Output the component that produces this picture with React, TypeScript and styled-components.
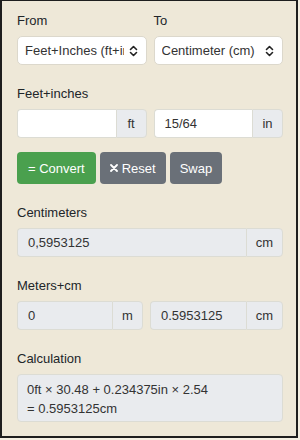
import React from 'react';
import styled, { createGlobalStyle } from 'styled-components';

const GlobalStyle = createGlobalStyle`
  body {
    margin: 0;
    background: #f4efe2;
    font-family: "Liberation Sans", Arial, sans-serif;
    color: #212529;
  }
`;

export default function App() {
  return (
    <>
      <GlobalStyle />
      <Frame>
        <Row>
          <Field>
            <Label>From</Label>
            <SelectBox>
              <Select defaultValue="ftin">
                <option value="ftin">Feet+Inches (ft+in)</option>
              </Select>
              <Chevron />
            </SelectBox>
          </Field>
          <Field>
            <Label>To</Label>
            <SelectBox>
              <Select defaultValue="cm">
                <option value="cm">Centimeter (cm)</option>
              </Select>
              <Chevron />
            </SelectBox>
          </Field>
        </Row>

        <Section>
          <Label>Feet+inches</Label>
          <Row>
            <Group>
              <Input defaultValue="" />
              <Addon>ft</Addon>
            </Group>
            <Group>
              <Input defaultValue="15/64" />
              <Addon>in</Addon>
            </Group>
          </Row>
        </Section>

        <Buttons>
          <Button $tone="green" $wide>= Convert</Button>
          <Button $tone="grey">
            <svg width="8" height="8" viewBox="0 0 8 8">
              <path d="M1 1 L7 7 M7 1 L1 7" stroke="#fff" strokeWidth="1.8" strokeLinecap="round" />
            </svg>
            Reset
          </Button>
          <Button $tone="grey">Swap</Button>
        </Buttons>

        <Section>
          <Label>Centimeters</Label>
          <Group>
            <Input readOnly $readonly defaultValue="0,5953125" />
            <Addon>cm</Addon>
          </Group>
        </Section>

        <Section>
          <Label>Meters+cm</Label>
          <MetersRow>
            <Group>
              <Input readOnly $readonly defaultValue="0" />
              <Addon>m</Addon>
            </Group>
            <Group>
              <Input readOnly $readonly defaultValue="0.5953125" />
              <Addon>cm</Addon>
            </Group>
          </MetersRow>
        </Section>

        <Section>
          <Label>Calculation</Label>
          <Calc>
            0ft × 30.48 + 0.234375in × 2.54
            <br />= 0.5953125cm
          </Calc>
        </Section>
      </Frame>
    </>
  );
}

function Chevron() {
  return (
    <ChevronIcon width="9" height="12" viewBox="0 0 9 12">
      <path d="M1.5 4.5 L4.5 1.5 L7.5 4.5 M1.5 7.5 L4.5 10.5 L7.5 7.5" fill="none" stroke="#222" strokeWidth="1.6" strokeLinecap="round" strokeLinejoin="round" />
    </ChevronIcon>
  );
}

const Frame = styled.div`
  box-sizing: border-box;
  width: 298px;
  height: 438px;
  border: 2px solid #1e1e1e;
  border-top-width: 1px;
  background: #eee8d8;
  padding: 12px 13px 0 15px;
  display: flex;
  flex-direction: column;
`;

const Row = styled.div`
  display: grid;
  grid-template-columns: minmax(0, 1fr) minmax(0, 1fr);
  gap: 7px;
`;

const MetersRow = styled.div`
  display: grid;
  grid-template-columns: 126px 133px;
  gap: 7px;
`;

const Field = styled.div`
  display: flex;
  flex-direction: column;
  min-width: 0;
`;

const Section = styled.div`
  display: flex;
  flex-direction: column;
  margin-top: 21px;
`;

const Label = styled.div`
  font-size: 13px;
  line-height: 16px;
  margin-bottom: 7px;
  color: #212529;
`;

const SelectBox = styled.div`
  position: relative;
  height: 29px;
`;

const Select = styled.select`
  appearance: none;
  -webkit-appearance: none;
  box-sizing: border-box;
  width: 100%;
  height: 29px;
  border: 1px solid #dcd8cc;
  border-radius: 5px;
  background: #fff;
  font-family: inherit;
  font-size: 13px;
  color: #333;
  padding: 0 22px 0 7px;
  outline: none;
`;

const ChevronIcon = styled.svg`
  position: absolute;
  right: 9px;
  top: 9px;
  pointer-events: none;
`;

const Group = styled.div`
  display: flex;
  height: 29px;
  min-width: 0;
`;

const Input = styled.input<{ $readonly?: boolean }>`
  box-sizing: border-box;
  flex: 1;
  width: 0;
  min-width: 0;
  height: 29px;
  border: 1px solid #dcdcd4;
  border-right: none;
  border-radius: 4px 0 0 4px;
  background: ${(p) => (p.$readonly ? '#e9ebee' : '#fff')};
  font-family: inherit;
  font-size: 13px;
  color: #333;
  padding: 0 10px;
  outline: none;
`;

const Addon = styled.div`
  box-sizing: border-box;
  min-width: 31px;
  height: 29px;
  display: flex;
  align-items: center;
  justify-content: center;
  padding: 0 9px;
  border: 1px solid #dcdcd4;
  border-radius: 0 4px 4px 0;
  background: #e9ebee;
  font-size: 13px;
  color: #333;
`;

const Buttons = styled.div`
  display: flex;
  gap: 4px;
  margin-top: 14px;
`;

const Button = styled.button<{ $tone: 'green' | 'grey'; $wide?: boolean }>`
  height: 32px;
  display: flex;
  align-items: center;
  gap: 4px;
  padding: 0 ${(p) => (p.$wide ? '11px' : '10px')};
  border: none;
  border-radius: 4px;
  background: ${(p) => (p.$tone === 'green' ? '#4aa04e' : '#6a7078')};
  color: #fff;
  font-family: inherit;
  font-size: 13px;
`;

const Calc = styled.div`
  box-sizing: border-box;
  height: 48px;
  padding: 5px 9px;
  border: 1px solid #dcdcd4;
  border-radius: 4px;
  background: #e9ebee;
  font-size: 13px;
  line-height: 19px;
  color: #333;
`;
